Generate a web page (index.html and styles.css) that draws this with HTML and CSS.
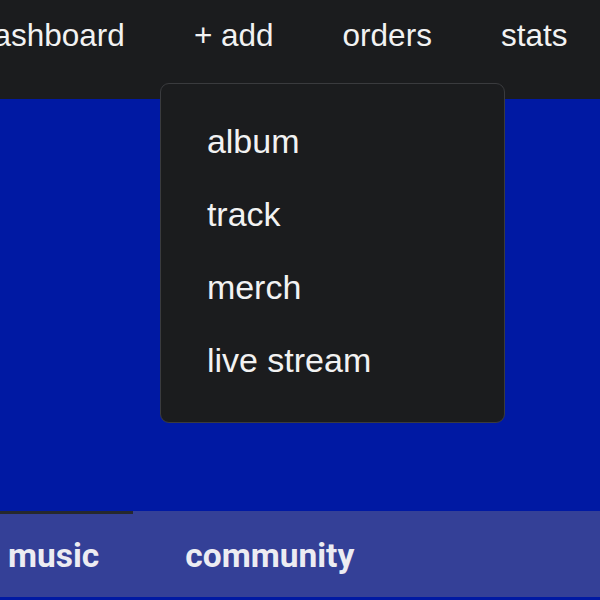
FILE: index.html
```html
<!DOCTYPE html>
<html lang="en">
<head>
    <meta charset="UTF-8">
    <meta name="viewport" content="width=device-width, initial-scale=1.0">
    <title>Artist dashboard</title>
    <link rel="stylesheet" href="styles.css">
</head>
<body>
    <header class="topbar">
        <ul class="nav">
            <li class="nav-item">dashboard</li>
            <li class="nav-item nav-add">
                + add
                <div class="dropdown">
                    <div class="dropdown-item">album</div>
                    <div class="dropdown-item">track</div>
                    <div class="dropdown-item">merch</div>
                    <div class="dropdown-item">live stream</div>
                </div>
            </li>
            <li class="nav-item">orders</li>
            <li class="nav-item">stats</li>
        </ul>
    </header>

    <main class="hero"></main>

    <nav class="tabs">
        <div class="tab active">music</div>
        <div class="tab">community</div>
    </nav>
</body>
</html>
```

FILE: styles.css
```css
body {
    margin: 0;
    background-color: #0019a3;
    font-family: "Liberation Sans", Arial, sans-serif;
    color: #f2f2f2;
    overflow: hidden;
}

.topbar {
    height: 99px;
    background-color: #1b1c1e;
}

.nav {
    display: flex;
    gap: 69px;
    list-style: none;
    margin: 0 0 0 -24px;
    padding: 16px 0 0 0;
}

.nav-item {
    font-size: 31.5px;
    line-height: 38px;
    white-space: nowrap;
}

.nav-add {
    position: relative;
}

.dropdown {
    position: absolute;
    top: 67px;
    left: -34px;
    width: 345px;
    box-sizing: border-box;
    padding: 21px 0 25px;
    background-color: #1b1c1e;
    border: 1px solid #3a3b3e;
    border-radius: 9px;
}

.dropdown-item {
    padding-left: 46px;
    font-size: 34px;
    line-height: 73px;
}

.hero {
    height: 412px;
}

.tabs {
    display: flex;
    gap: 18px;
    height: 86px;
    margin-left: -26px;
    background-color: #344097;
}

.tab {
    display: flex;
    align-items: center;
    padding: 0 34px;
    font-family: Roboto, "Liberation Sans", sans-serif;
    font-weight: bold;
    font-size: 33.5px;
    color: #ececf2;
    border-top: 3px solid transparent;
    box-sizing: border-box;
}

.tab.active {
    border-top-color: #26282e;
}
```
